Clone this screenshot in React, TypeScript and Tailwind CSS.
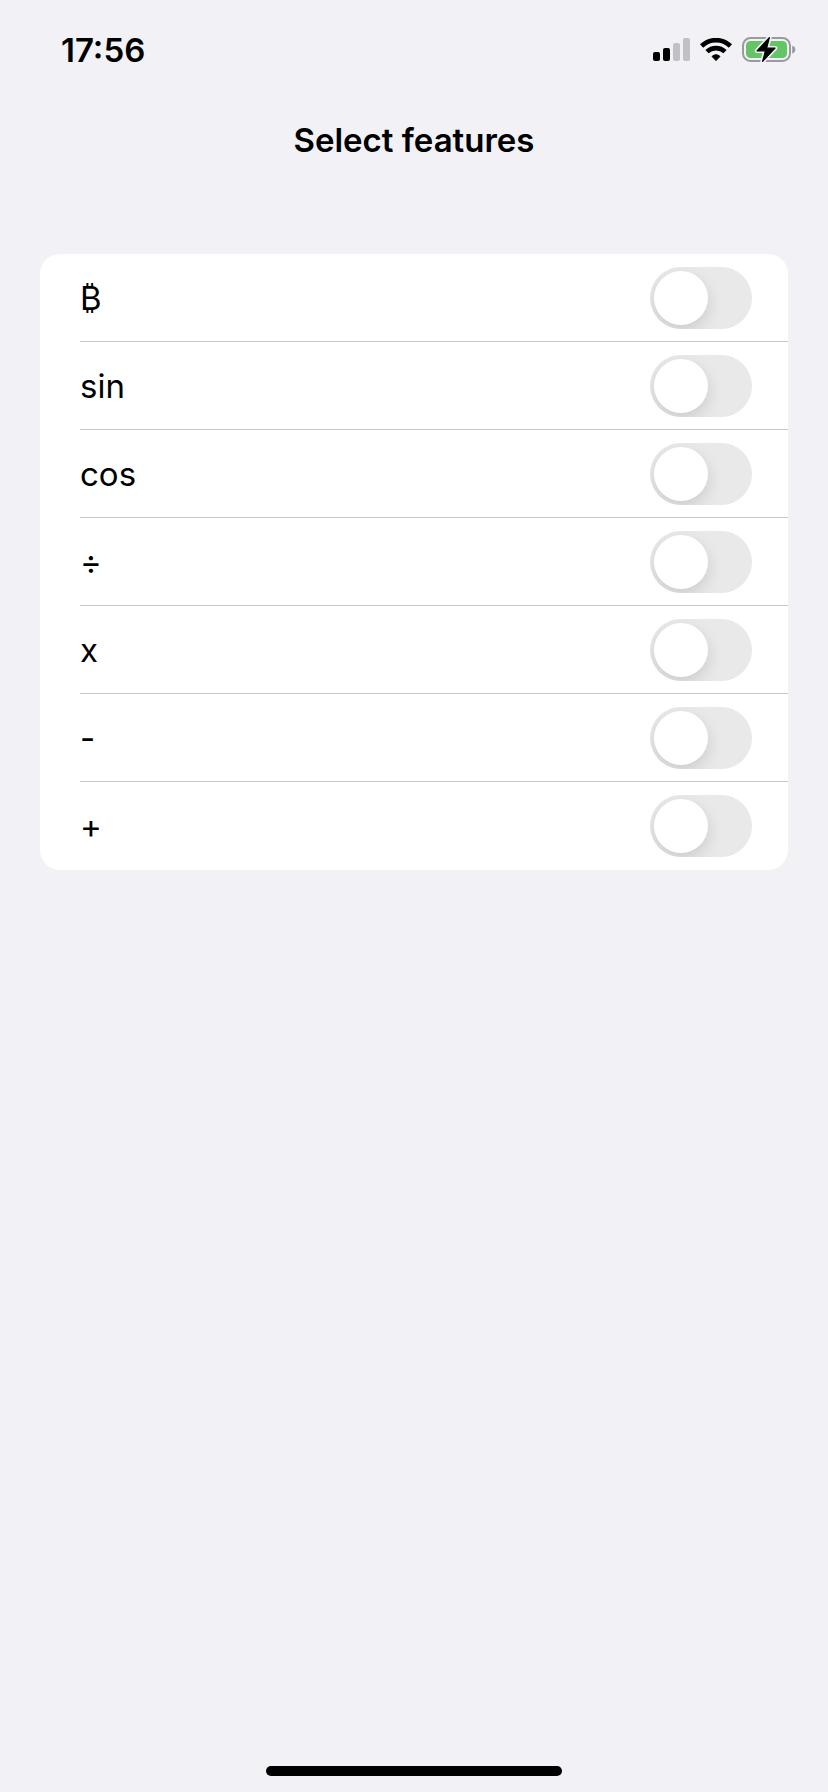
import { useState } from "react";

const features = ["₿", "sin", "cos", "÷", "x", "-", "+"];

function SignalIcon() {
  return (
    <svg width="37" height="24" viewBox="0 0 37 24" aria-hidden="true">
      <rect x="0" y="14" width="7" height="9" rx="2" fill="#000" />
      <rect x="10" y="10" width="7" height="13" rx="2" fill="#000" />
      <rect x="20" y="5" width="7" height="18" rx="2" fill="#c1c0c6" />
      <rect x="30" y="0" width="7" height="23" rx="2" fill="#c1c0c6" />
    </svg>
  );
}

function WifiIcon() {
  return (
    <svg width="32" height="24" viewBox="0 0 32 24" aria-hidden="true">
      <g fill="none" stroke="#000" strokeWidth="4.6">
        <path d="M1.6 8A20.6 20.6 0 0 1 30.4 8" />
        <path d="M7 13.7A13 13 0 0 1 25 13.7" />
      </g>
      <path
        d="M12 18.4a6.2 6.2 0 0 1 8 0L16 22.6z"
        fill="#000"
        stroke="#000"
        strokeWidth="1"
        strokeLinejoin="round"
      />
    </svg>
  );
}

function BatteryIcon() {
  return (
    <svg width="54" height="30" viewBox="0 0 54 30" aria-hidden="true">
      <rect x="1" y="3" width="47" height="23" rx="7.5" fill="none" stroke="#9b9b9f" strokeWidth="2" />
      <rect x="4" y="6" width="41" height="17" rx="4.5" fill="#65c466" />
      <path d="M50.2 10.7a4 4 0 0 1 0 7.8z" fill="#9b9b9f" />
      <path
        d="M27.4 2.6L15 15.8h8.4L20.6 26.4 33 13.2h-8.4z"
        fill="none"
        stroke="#f1f1f6"
        strokeWidth="4.5"
        strokeLinejoin="round"
      />
      <path
        d="M27.4 2.6L15 15.8h8.4L20.6 26.4 33 13.2h-8.4z"
        fill="#000"
        stroke="#000"
        strokeWidth="1.2"
        strokeLinejoin="round"
      />
    </svg>
  );
}

function FeatureRow({ label, last }: { label: string; last: boolean }) {
  const [on, setOn] = useState(false);
  return (
    <li className="pl-10">
      <label
        className={`flex h-[88px] items-center justify-between pr-9 ${
          last ? "" : "border-b border-[#c6c6c8]"
        }`}
      >
        <span className="text-[33px] leading-10">{label}</span>
        <input
          type="checkbox"
          role="switch"
          checked={on}
          onChange={(event) => setOn(event.target.checked)}
          className="flex h-[62px] w-[102px] shrink-0 cursor-pointer appearance-none items-center overflow-hidden rounded-full bg-[#e9e9e9] p-1 transition-colors before:size-[54px] before:rounded-full before:bg-white before:shadow-[0_6px_16px_rgba(0,0,0,0.13)] before:transition-transform before:content-[''] checked:bg-[#65c466] checked:before:translate-x-10"
        />
      </label>
    </li>
  );
}

export default function App() {
  return (
    <div className="flex min-h-screen flex-col bg-[#f1f1f6] font-['Inter','Noto_Sans',sans-serif] text-black">
      <header>
        <div className="flex h-[100px] items-center justify-between pr-8 pl-[61px]">
          <time className="text-[33px] leading-10 font-semibold">17:56</time>
          <div className="flex items-center gap-[10px]">
            <SignalIcon />
            <WifiIcon />
            <BatteryIcon />
          </div>
        </div>
        <h1 className="pt-5 text-center text-[33px] leading-10 font-semibold">Select features</h1>
      </header>
      <main className="flex-1 px-10 pt-[94px]">
        <ul className="overflow-hidden rounded-[20px] bg-white">
          {features.map((feature, index) => (
            <FeatureRow key={feature} label={feature} last={index === features.length - 1} />
          ))}
        </ul>
      </main>
      <footer className="flex justify-center pb-4">
        <div className="h-[10px] w-[296px] rounded-full bg-black" />
      </footer>
    </div>
  );
}
